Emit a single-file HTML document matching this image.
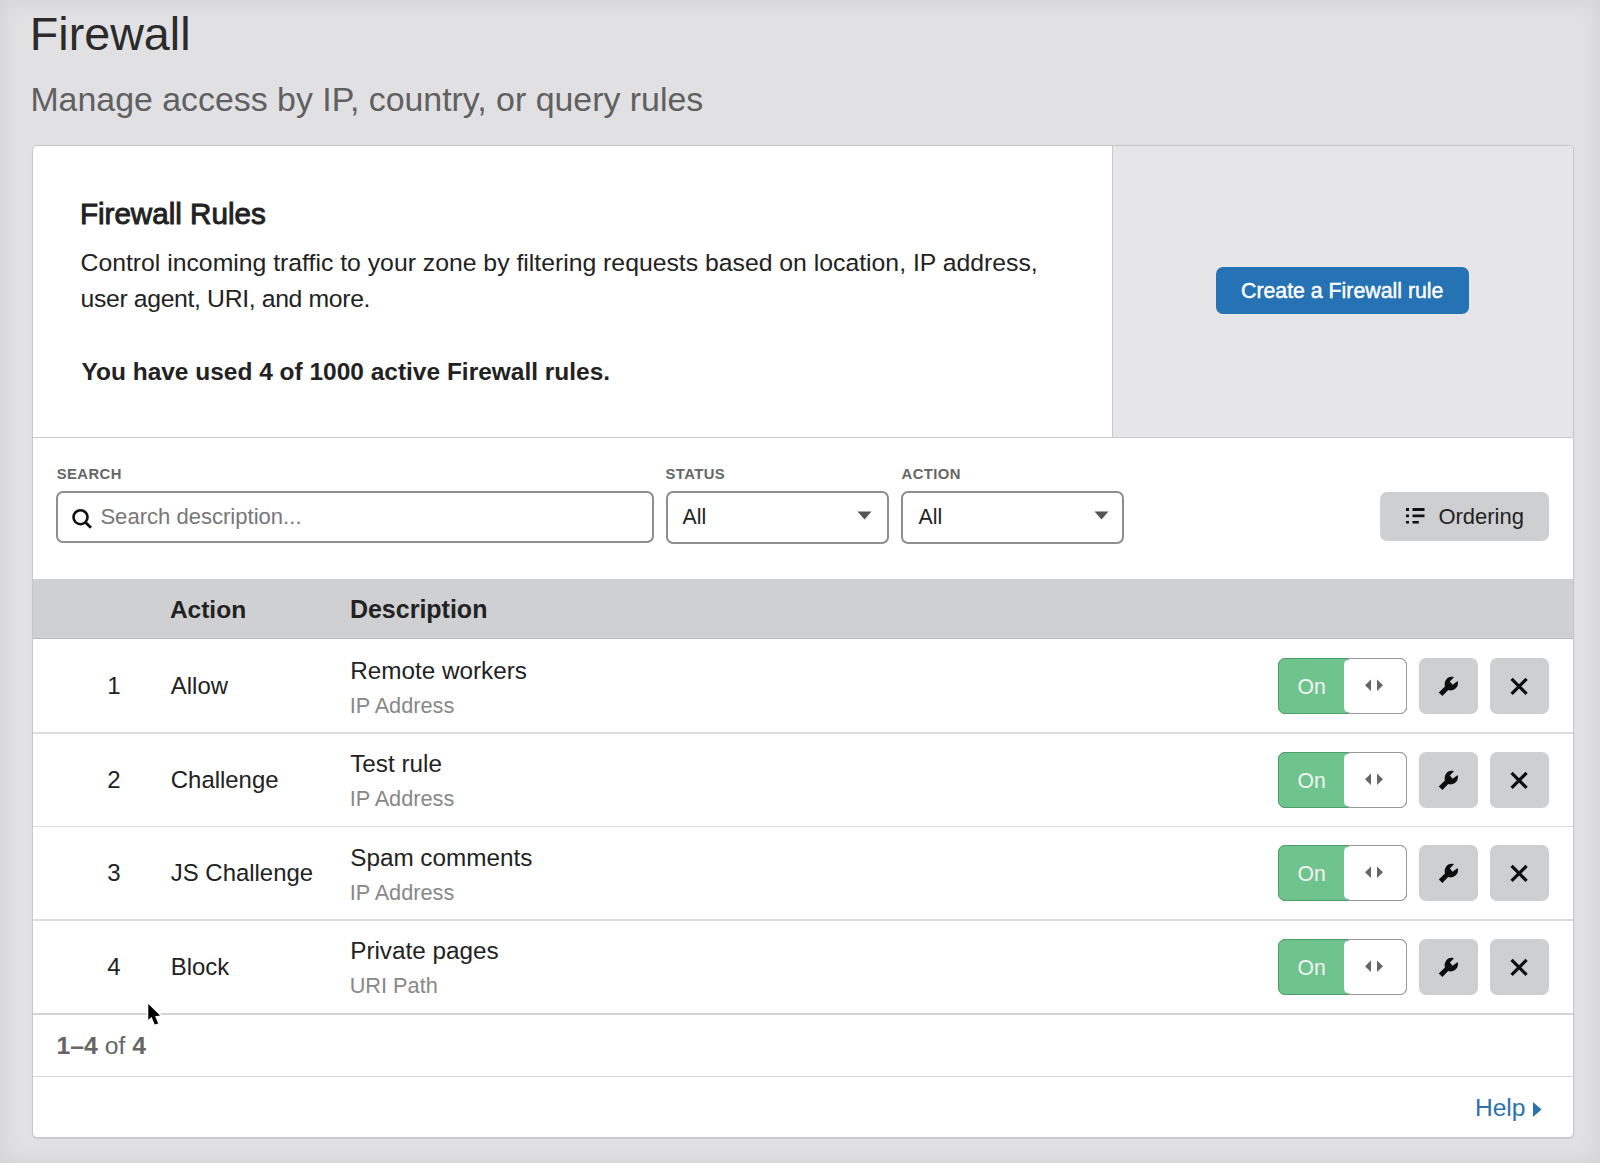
<!DOCTYPE html>
<html><head><meta charset="utf-8">
<style>
html,body{margin:0;padding:0;width:1600px;height:1163px;overflow:hidden}
body{background:#e1e1e3;position:relative;font-family:"Liberation Sans",sans-serif;color:#222}
.vig{position:absolute;left:0;top:0;width:1600px;height:1163px;box-shadow:inset 0 0 22px rgba(0,0,0,0.07);pointer-events:none;z-index:50}
.t{position:absolute;line-height:1;white-space:nowrap}
.card{position:absolute;left:32px;top:145px;width:1540px;height:991px;border:1px solid #c6c7c9;border-radius:5px;background:#fff;overflow:hidden;box-shadow:0 1px 1px rgba(0,0,0,0.08)}
.abs{position:absolute}
.right{position:absolute;left:1079px;top:0;width:461px;height:291px;background:#e6e6e8;border-left:1px solid #c8c9cb}
.hr{position:absolute;left:0;width:1540px;height:1px;background:#dcdddf}
.lbl{font-weight:700;color:#666;letter-spacing:0.03em}
.box{position:absolute;border:2px solid #8e8e90;border-radius:7px;box-sizing:border-box;background:#fff}
.gbtn{position:absolute;background:#cecfd1;border-radius:7px}
.tog{position:absolute;width:129px;height:56px;box-sizing:border-box}
</style></head><body>
<div class="t" style="left:29.8px;top:11.2px;font-size:46.67px;color:#2b2b2b">Firewall</div>
<div class="t" style="left:30.4px;top:83px;font-size:33.89px;color:#606060">Manage access by IP, country, or query rules</div>

<div class="card">
  <div class="right"></div>
  <div class="hr" style="top:291px;background:#c8c9cb"></div>
</div>

<div class="t" style="left:79.9px;top:198.6px;font-size:29.6px;font-weight:400;color:#222;-webkit-text-stroke:0.95px #222">Firewall Rules</div>
<div class="t" style="left:80.5px;top:251.4px;font-size:24.77px;color:#222">Control incoming traffic to your zone by filtering requests based on location, IP address,</div>
<div class="t" style="left:80.5px;top:287.2px;font-size:24.77px;color:#222;letter-spacing:-0.35px">user agent, URI, and more.</div>
<div class="t" style="left:81.5px;top:359.7px;font-size:24.47px;font-weight:700;color:#222">You have used 4 of 1000 active Firewall rules.</div>

<div class="abs" style="left:1216px;top:267px;width:253px;height:47px;background:#2573b4;border-radius:7px"></div>
<div class="t" style="left:1241px;top:281px;font-size:21.3px;font-weight:400;color:#fff;-webkit-text-stroke:0.45px #fff">Create a Firewall rule</div>


<!-- filters -->
<div class="t lbl" style="left:56.7px;top:467px;font-size:14.8px">SEARCH</div>
<div class="t lbl" style="left:665.5px;top:467px;font-size:14.8px">STATUS</div>
<div class="t lbl" style="left:901.5px;top:467px;font-size:14.8px">ACTION</div>
<div class="box" style="left:56px;top:491px;width:598px;height:52px"></div>
<svg class="abs" style="left:70px;top:507px" width="24" height="24" viewBox="0 0 24 24"><circle cx="10.5" cy="10.2" r="7" fill="none" stroke="#111" stroke-width="2.6"/><line x1="15.6" y1="15.4" x2="21" y2="20.8" stroke="#111" stroke-width="2.8" stroke-linecap="butt"/></svg>
<div class="t" style="left:100.4px;top:506.3px;font-size:22.07px;color:#777">Search description...</div>
<div class="box" style="left:666px;top:491px;width:223px;height:53px"></div>
<div class="t" style="left:682.5px;top:506.7px;font-size:21.3px;color:#222">All</div>
<svg class="abs" style="left:857px;top:511px" width="15" height="9"><path d="M0.5 0.5 L14.5 0.5 L7.5 8.5Z" fill="#555"/></svg>
<div class="box" style="left:901px;top:491px;width:223px;height:53px"></div>
<div class="t" style="left:918.5px;top:506.7px;font-size:21.3px;color:#222">All</div>
<svg class="abs" style="left:1094px;top:511px" width="15" height="9"><path d="M0.5 0.5 L14.5 0.5 L7.5 8.5Z" fill="#555"/></svg>
<div class="gbtn" style="left:1380px;top:492px;width:169px;height:49px"></div>
<svg class="abs" style="left:1406px;top:508px" width="19" height="16"><rect x="0" y="0" width="3" height="3" fill="#111"/><rect x="6.5" y="0" width="12" height="3" fill="#111"/><rect x="0" y="6.5" width="3" height="2.7" fill="#111"/><rect x="6.5" y="6.5" width="12" height="2.7" fill="#111"/><rect x="0" y="13" width="3" height="2.5" fill="#111"/><rect x="6.5" y="13" width="6.3" height="2.5" fill="#111"/></svg>
<div class="t" style="left:1438.4px;top:506.2px;font-size:21.98px;color:#222">Ordering</div>

<!-- table header -->
<div class="abs" style="left:33px;top:579px;width:1540px;height:59px;background:#cfd0d2;border-bottom:1px solid #b9babc"></div>
<div class="t" style="left:169.9px;top:597.5px;font-size:24.5px;font-weight:700;color:#222">Action</div>
<div class="t" style="left:349.9px;top:597px;font-size:25px;font-weight:700;color:#222">Description</div>

<div class="t" style="left:58.5px;width:62px;text-align:right;top:674.0px;font-size:24px;color:#222">1</div>
<div class="t" style="left:170.8px;top:674.0px;font-size:23.93px;color:#222">Allow</div>
<div class="t" style="left:350.2px;top:658.6px;font-size:24.29px;color:#222">Remote workers</div>
<div class="t" style="left:349.7px;top:694.8px;font-size:21.71px;color:#888">IP Address</div>
<div class="abs" style="left:1278px;top:658.0px;width:129px;height:56px;border:1.5px solid #999;border-radius:7px;box-sizing:border-box;background:#fff"></div>
<div class="abs" style="left:1278px;top:658.0px;width:70px;height:56px;border:1.5px solid #4f9d69;border-radius:7px 0 0 7px;box-sizing:border-box;background:#6fc48e"></div>
<div class="abs" style="left:1344px;top:658.0px;width:63px;height:56px;border:1.5px solid #999;border-left-color:#fff;border-radius:7px;box-sizing:border-box;background:#fff"></div>
<div class="t" style="left:1297.5px;top:676.3px;font-size:21.15px;color:#f4f4f4">On</div>
<svg class="abs" style="left:1364px;top:679.0px" width="20" height="13"><path d="M7 0.5 L7 12 L1 6.25Z M13 0.5 L13 12 L19 6.25Z" fill="#666"/></svg>
<div class="gbtn" style="left:1419px;top:658.0px;width:59px;height:56px"></div>
<svg class="abs" style="left:1434px;top:672.0px" width="30" height="28" viewBox="0 0 30 28"><path d="M8.4 23.9 L4.8 20.4 L10.9 14.4 C10.3 11.8 10.7 9 12.6 7 C14.3 5.1 17 4.3 19.9 5.2 L15.9 9.5 L18.6 12.8 L23.7 9.1 C24.6 12 23.7 15 21.2 16.8 C19.2 18.3 16.5 18.8 14.2 18.1 Z" fill="#0d0d0d"/></svg>
<div class="gbtn" style="left:1490px;top:658.0px;width:59px;height:56px"></div>
<svg class="abs" style="left:1509px;top:676.0px" width="20" height="20" viewBox="0 0 20 20"><path d="M2.6 2.9 L17.6 17.9 M17.6 2.9 L2.6 17.9" stroke="#0d0d0d" stroke-width="3.2"/></svg>
<div class="abs" style="left:33px;top:732.0px;width:1540px;height:1.5px;background:#dcdddf"></div>
<div class="t" style="left:58.5px;width:62px;text-align:right;top:767.5px;font-size:24px;color:#222">2</div>
<div class="t" style="left:170.8px;top:767.5px;font-size:23.93px;color:#222">Challenge</div>
<div class="t" style="left:350.2px;top:752.1px;font-size:24.29px;color:#222">Test rule</div>
<div class="t" style="left:349.7px;top:788.3px;font-size:21.71px;color:#888">IP Address</div>
<div class="abs" style="left:1278px;top:751.5px;width:129px;height:56px;border:1.5px solid #999;border-radius:7px;box-sizing:border-box;background:#fff"></div>
<div class="abs" style="left:1278px;top:751.5px;width:70px;height:56px;border:1.5px solid #4f9d69;border-radius:7px 0 0 7px;box-sizing:border-box;background:#6fc48e"></div>
<div class="abs" style="left:1344px;top:751.5px;width:63px;height:56px;border:1.5px solid #999;border-left-color:#fff;border-radius:7px;box-sizing:border-box;background:#fff"></div>
<div class="t" style="left:1297.5px;top:769.8px;font-size:21.15px;color:#f4f4f4">On</div>
<svg class="abs" style="left:1364px;top:772.5px" width="20" height="13"><path d="M7 0.5 L7 12 L1 6.25Z M13 0.5 L13 12 L19 6.25Z" fill="#666"/></svg>
<div class="gbtn" style="left:1419px;top:751.5px;width:59px;height:56px"></div>
<svg class="abs" style="left:1434px;top:765.5px" width="30" height="28" viewBox="0 0 30 28"><path d="M8.4 23.9 L4.8 20.4 L10.9 14.4 C10.3 11.8 10.7 9 12.6 7 C14.3 5.1 17 4.3 19.9 5.2 L15.9 9.5 L18.6 12.8 L23.7 9.1 C24.6 12 23.7 15 21.2 16.8 C19.2 18.3 16.5 18.8 14.2 18.1 Z" fill="#0d0d0d"/></svg>
<div class="gbtn" style="left:1490px;top:751.5px;width:59px;height:56px"></div>
<svg class="abs" style="left:1509px;top:769.5px" width="20" height="20" viewBox="0 0 20 20"><path d="M2.6 2.9 L17.6 17.9 M17.6 2.9 L2.6 17.9" stroke="#0d0d0d" stroke-width="3.2"/></svg>
<div class="abs" style="left:33px;top:825.5px;width:1540px;height:1.5px;background:#dcdddf"></div>
<div class="t" style="left:58.5px;width:62px;text-align:right;top:861.0px;font-size:24px;color:#222">3</div>
<div class="t" style="left:170.8px;top:861.0px;font-size:23.93px;color:#222">JS Challenge</div>
<div class="t" style="left:350.2px;top:845.6px;font-size:24.29px;color:#222">Spam comments</div>
<div class="t" style="left:349.7px;top:881.8px;font-size:21.71px;color:#888">IP Address</div>
<div class="abs" style="left:1278px;top:845.0px;width:129px;height:56px;border:1.5px solid #999;border-radius:7px;box-sizing:border-box;background:#fff"></div>
<div class="abs" style="left:1278px;top:845.0px;width:70px;height:56px;border:1.5px solid #4f9d69;border-radius:7px 0 0 7px;box-sizing:border-box;background:#6fc48e"></div>
<div class="abs" style="left:1344px;top:845.0px;width:63px;height:56px;border:1.5px solid #999;border-left-color:#fff;border-radius:7px;box-sizing:border-box;background:#fff"></div>
<div class="t" style="left:1297.5px;top:863.3px;font-size:21.15px;color:#f4f4f4">On</div>
<svg class="abs" style="left:1364px;top:866.0px" width="20" height="13"><path d="M7 0.5 L7 12 L1 6.25Z M13 0.5 L13 12 L19 6.25Z" fill="#666"/></svg>
<div class="gbtn" style="left:1419px;top:845.0px;width:59px;height:56px"></div>
<svg class="abs" style="left:1434px;top:859.0px" width="30" height="28" viewBox="0 0 30 28"><path d="M8.4 23.9 L4.8 20.4 L10.9 14.4 C10.3 11.8 10.7 9 12.6 7 C14.3 5.1 17 4.3 19.9 5.2 L15.9 9.5 L18.6 12.8 L23.7 9.1 C24.6 12 23.7 15 21.2 16.8 C19.2 18.3 16.5 18.8 14.2 18.1 Z" fill="#0d0d0d"/></svg>
<div class="gbtn" style="left:1490px;top:845.0px;width:59px;height:56px"></div>
<svg class="abs" style="left:1509px;top:863.0px" width="20" height="20" viewBox="0 0 20 20"><path d="M2.6 2.9 L17.6 17.9 M17.6 2.9 L2.6 17.9" stroke="#0d0d0d" stroke-width="3.2"/></svg>
<div class="abs" style="left:33px;top:919.0px;width:1540px;height:1.5px;background:#dcdddf"></div>
<div class="t" style="left:58.5px;width:62px;text-align:right;top:954.5px;font-size:24px;color:#222">4</div>
<div class="t" style="left:170.8px;top:954.5px;font-size:23.93px;color:#222">Block</div>
<div class="t" style="left:350.2px;top:939.1px;font-size:24.29px;color:#222">Private pages</div>
<div class="t" style="left:349.7px;top:975.3px;font-size:21.71px;color:#888">URI Path</div>
<div class="abs" style="left:1278px;top:938.5px;width:129px;height:56px;border:1.5px solid #999;border-radius:7px;box-sizing:border-box;background:#fff"></div>
<div class="abs" style="left:1278px;top:938.5px;width:70px;height:56px;border:1.5px solid #4f9d69;border-radius:7px 0 0 7px;box-sizing:border-box;background:#6fc48e"></div>
<div class="abs" style="left:1344px;top:938.5px;width:63px;height:56px;border:1.5px solid #999;border-left-color:#fff;border-radius:7px;box-sizing:border-box;background:#fff"></div>
<div class="t" style="left:1297.5px;top:956.8px;font-size:21.15px;color:#f4f4f4">On</div>
<svg class="abs" style="left:1364px;top:959.5px" width="20" height="13"><path d="M7 0.5 L7 12 L1 6.25Z M13 0.5 L13 12 L19 6.25Z" fill="#666"/></svg>
<div class="gbtn" style="left:1419px;top:938.5px;width:59px;height:56px"></div>
<svg class="abs" style="left:1434px;top:952.5px" width="30" height="28" viewBox="0 0 30 28"><path d="M8.4 23.9 L4.8 20.4 L10.9 14.4 C10.3 11.8 10.7 9 12.6 7 C14.3 5.1 17 4.3 19.9 5.2 L15.9 9.5 L18.6 12.8 L23.7 9.1 C24.6 12 23.7 15 21.2 16.8 C19.2 18.3 16.5 18.8 14.2 18.1 Z" fill="#0d0d0d"/></svg>
<div class="gbtn" style="left:1490px;top:938.5px;width:59px;height:56px"></div>
<svg class="abs" style="left:1509px;top:956.5px" width="20" height="20" viewBox="0 0 20 20"><path d="M2.6 2.9 L17.6 17.9 M17.6 2.9 L2.6 17.9" stroke="#0d0d0d" stroke-width="3.2"/></svg>


<!-- footer -->
<div class="abs" style="left:33px;top:1013px;width:1540px;height:2px;background:#d3d4d6"></div>
<div class="t" style="left:56.4px;top:1034.2px;font-size:24.79px;color:#666"><b>1–4</b> of <b>4</b></div>
<div class="abs" style="left:33px;top:1076px;width:1540px;height:1px;background:#d3d4d6"></div>
<div class="t" style="left:1474.9px;top:1096px;font-size:24.61px;color:#2a72b0">Help</div>
<svg class="abs" style="left:1533px;top:1102px" width="9" height="16"><path d="M0 0 L8.5 7.5 L0 15Z" fill="#2a72b0"/></svg>
<svg class="abs" style="left:144px;top:1000px;z-index:40" width="22" height="30" viewBox="0 0 22 30"><g transform="translate(2,2)"><path d="M2.3 1.9 L2.3 17.8 L5.6 15 L8.7 22.4 L12.2 21.6 L9.1 14.3 L14.1 13.5 Z" fill="#fff" stroke="#fff" stroke-width="3" stroke-linejoin="round"/><path d="M2.3 1.9 L2.3 17.8 L5.6 15 L8.7 22.4 L12.2 21.6 L9.1 14.3 L14.1 13.5 Z" fill="#000"/></g></svg>
<div class="vig"></div>
</body></html>
